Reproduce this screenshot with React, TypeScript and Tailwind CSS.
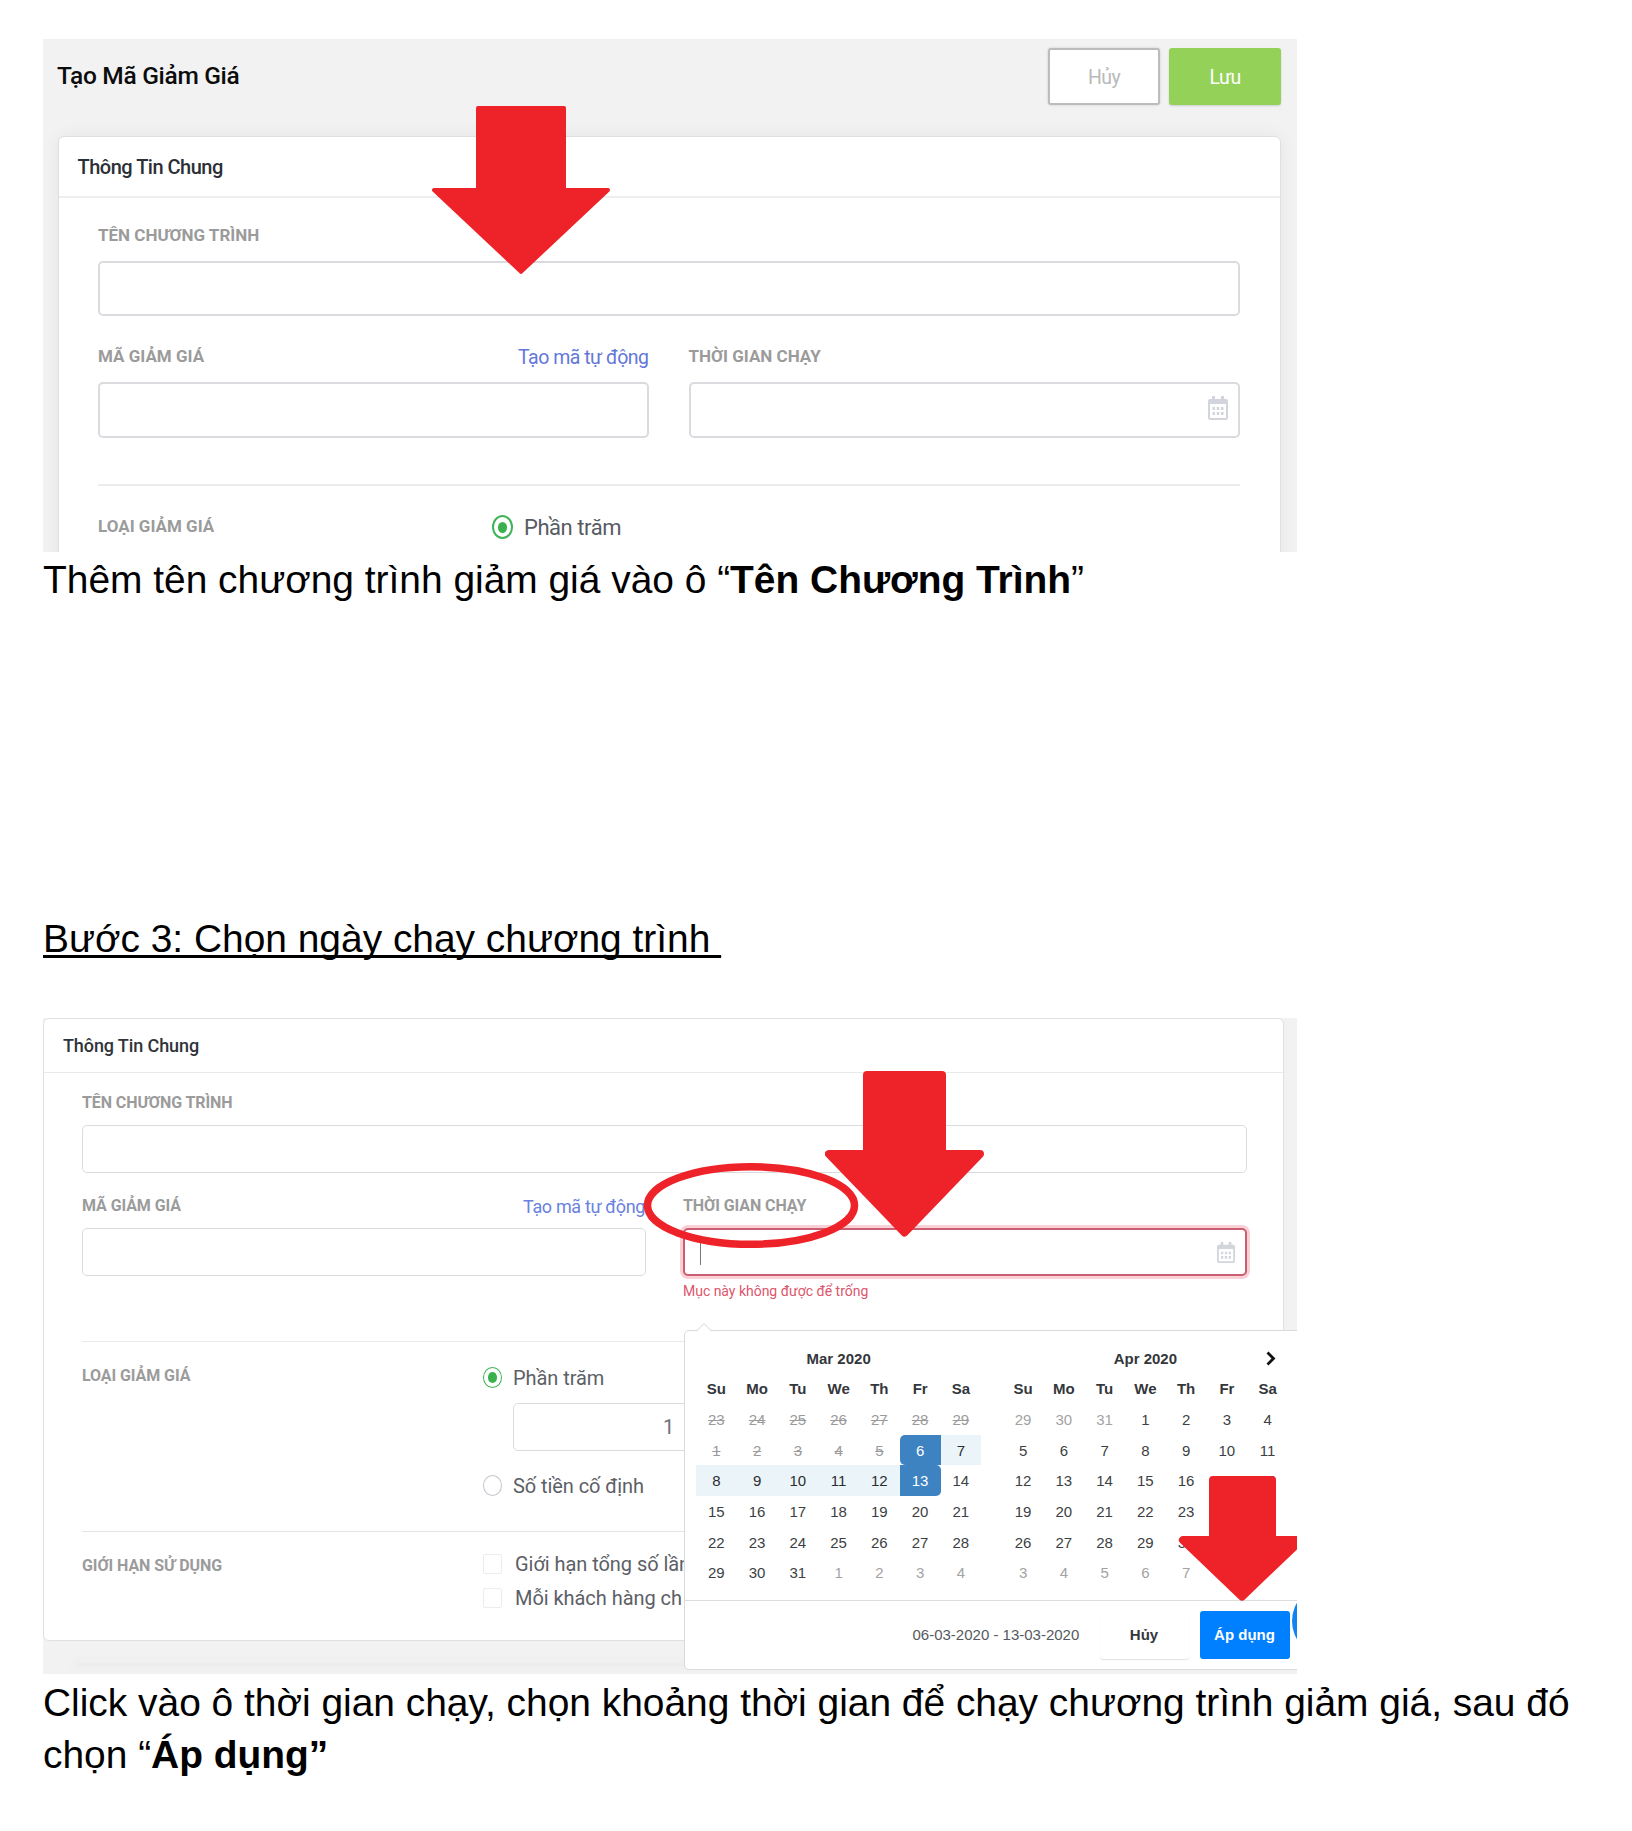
import React from "react";

const RED = "#ee2229";

/* Downward block arrow laid over a figure */
function Arrow({ className, width, height, shaftLeft, shaftRight, neck, round }: {
  className: string; width: number; height: number; shaftLeft: number; shaftRight: number; neck: number; round: number;
}) {
  const r = round;
  return (
    <svg className={"absolute z-20 " + className} width={width} height={height} viewBox={`0 0 ${width} ${height}`}>
      <path
        d={`M${shaftLeft + r} ${r}H${shaftRight - r}V${neck + r}H${width - r}L${width / 2} ${height - r * 1.6}L${r} ${neck + r}H${shaftLeft + r}Z`}
        fill={RED}
        stroke={RED}
        strokeWidth={r * 2}
        strokeLinejoin="round"
      />
    </svg>
  );
}

function CalendarIcon({ className }: { className: string }) {
  return (
    <svg className={className} viewBox="0 0 20 24" preserveAspectRatio="none" fill="#d2d5dc">
      <path d="M4 0h3v3h6V0h3v3h2a2 2 0 0 1 2 2v17a2 2 0 0 1-2 2H2a2 2 0 0 1-2-2V5a2 2 0 0 1 2-2h2zM2 8V22h16V8z" fillRule="evenodd" />
      <path d="M4.500 11h2.500v3h-2.500zM8.750 11h2.500v3h-2.500zM13 11h2.500v3h-2.500zM4.500 16h2.500v3h-2.500zM8.750 16h2.500v3h-2.500zM13 16h2.500v3h-2.500z" />
    </svg>
  );
}

function Radio({ checked, className }: { checked?: boolean; className: string }) {
  return (
    <span className={"flex shrink-0 items-center justify-center rounded-[50%] border bg-white " + (checked ? "border-[#41b457] " : "border-[#c3c6cb] ") + className}>
      {checked && <span className="h-[55%] w-[55%] rounded-[50%] bg-[#39b24d]" />}
    </span>
  );
}

function CreateCouponFigure() {
  const label = "text-[17px] leading-5 font-bold text-[#9b9b9b]";
  const field = "rounded-[5px] border-2 border-[#d9dbdf] bg-white";
  return (
    <figure className="relative h-[513px] w-[1254px] overflow-hidden bg-[#f2f2f2] font-[Roboto,sans-serif]">
      <div className="flex h-[97px] items-start justify-between pt-[9px] pr-4 pl-[14px]">
        <h1 className="mt-[12.500px] text-[24.500px] leading-[30px] font-medium tracking-[-0.3px] text-[#0c0c0c]">Tạo Mã Giảm Giá</h1>
        <div className="flex gap-[9px]">
          <button className="h-[57px] w-[112px] rounded-[3px] border-2 border-[#bcbcbd] bg-white pt-[2px] text-[19.500px] tracking-[-0.6px] text-[#b9b9bb] shadow-[0_0_3px_rgba(0,0,0,0.15)]">Hủy</button>
          <button className="h-[57px] w-[112px] rounded-[3px] bg-[#94d158] pt-[2px] text-[19.500px] tracking-[-0.6px] text-white shadow-[0_1px_2px_rgba(0,0,0,0.15)]">Lưu</button>
        </div>
      </div>
      <section className="ml-[15px] h-[440px] w-[1223px] rounded-t-[6px] border border-[#dfdfdf] bg-white shadow-[0_0_18px_rgba(0,0,0,0.06)]">
        <h2 className="flex h-[61px] items-center border-b-2 border-[#eceef0] pt-px pl-[18.500px] text-[20px] font-medium tracking-[-0.5px] text-[#2b3036]">Thông Tin Chung</h2>
        <div className="pt-[27px] pr-10 pl-[39px]">
          <div className={label}>TÊN CHƯƠNG TRÌNH</div>
          <div className={"mt-4 h-[55px] " + field} />
          <div className="mt-[30px] flex gap-[40px]">
            <div className="w-[551px]">
              <div className="flex justify-between">
                <span className={label}>MÃ GIẢM GIÁ</span>
                <a className="relative top-[2px] text-[19.500px] leading-5 tracking-[-0.5px] text-[#6377d9]">Tạo mã tự động</a>
              </div>
              <div className={"mt-4 h-14 " + field} />
            </div>
            <div className="w-[552px]">
              <div className={label}>THỜI GIAN CHẠY</div>
              <div className={"mt-4 flex h-14 items-start justify-end pt-3 pr-[10px] " + field}>
                <CalendarIcon className="h-6 w-5" />
              </div>
            </div>
          </div>
          <div className="mt-[46px] border-t-2 border-[#ececec]" />
          <div className="mt-[29px] flex">
            <div className={"mt-px w-[394px] " + label}>LOẠI GIẢM GIÁ</div>
            <Radio checked className="h-6 w-[21px] border-2" />
            <span className="ml-[11px] pt-[0.500px] text-[22px] leading-6 tracking-[-0.45px] text-[#575c63]">Phần trăm</span>
          </div>
        </div>
      </section>
      <Arrow className="top-[67px] left-[389px]" width={178} height={169} shaftLeft={44} shaftRight={134} neck={82} round={2} />
    </figure>
  );
}

type Kind = "off" | "muted" | "start" | "end" | "range";
type Day = { n: number; kind?: Kind };

const span = (from: number, to: number, kind?: Kind): Day[] =>
  Array.from({ length: to - from + 1 }, (_, i) => ({ n: from + i, kind }));

const march: Day[] = [
  ...span(23, 29, "off"), ...span(1, 5, "off"), { n: 6, kind: "start" }, ...span(7, 12, "range"),
  { n: 13, kind: "end" }, ...span(14, 31), ...span(1, 4, "muted"),
];
const april: Day[] = [...span(29, 31, "muted"), ...span(1, 30), ...span(1, 7, "muted")];

const dayStyle = {
  plain: "text-[#3c3f43]",
  off: "text-[#9b9b9b] line-through",
  muted: "text-[#a3a3a3]",
  start: "rounded-l-[5px] bg-[#3d82c1] text-white",
  end: "rounded-r-[5px] bg-[#3d82c1] text-white",
  range: "bg-[#ebf4f8] text-[#2b2e31]",
};

function Month({ title, days, next }: { title: string; days: Day[]; next?: boolean }) {
  return (
    <div className="relative grid auto-rows-[30.650px] grid-cols-[repeat(7,40.750px)] items-stretch text-center text-[15px] leading-[31px]">
      <div className="col-span-7 font-bold text-[#34373b]">{title}</div>
      {next && (
        <svg className="absolute top-[8px] right-[11px]" width="12" height="15" viewBox="0 0 12 15" fill="none" stroke="#111" strokeWidth="2.800">
          <path d="M2.500 1.500L8.500 7.500L2.500 13.500" />
        </svg>
      )}
      {["Su", "Mo", "Tu", "We", "Th", "Fr", "Sa"].map((d) => (
        <div key={d} className="font-bold text-[#34373b]">{d}</div>
      ))}
      {days.map((d, i) => (
        <div key={i} className={dayStyle[d.kind ?? "plain"]}>{d.n}</div>
      ))}
    </div>
  );
}

function DateRangePopup() {
  return (
    <div className="absolute top-[312px] left-[640.500px] z-10 h-[340px] w-[640px] rounded-[5px] border border-[#dadada] bg-white font-['Liberation_Sans',Arial,sans-serif]">
      <svg className="absolute -top-[9px] left-[10px]" width="18" height="10" viewBox="0 0 18 10">
        <path d="M1 9.500L9 1.500L17 9.500" fill="#fff" stroke="#d5d5d5" />
        <path d="M1 10H17" stroke="#fff" />
      </svg>
      <div className="flex gap-[21.500px] pt-[11.700px] pl-[11.500px]">
        <Month title="Mar 2020" days={march} />
        <Month title="Apr 2020" days={april} next />
      </div>
      <div className="mt-[11.800px] flex border-t border-[#dddddd] pt-[10px] pl-[228px] text-[15px] leading-[48px]">
        <span className="w-[187px] text-[#55595e]">06-03-2020 - 13-03-2020</span>
        <button className="h-12 w-[89px] rounded-[3px] bg-white text-[15px] font-bold text-[#34373b] shadow-[0_1px_1px_rgba(0,0,0,0.12)]">Hủy</button>
        <button className="ml-[11px] h-12 w-[90px] rounded-[3px] bg-[#0080ff] text-[15px] font-bold text-white">Áp dụng</button>
      </div>
    </div>
  );
}

function PickDateFigure() {
  const label = "text-[16px] leading-5 font-bold tracking-[-0.08px] text-[#9b9b9b]";
  const field = "rounded-[5px] border border-[#d9dbde] bg-white";
  const option = "text-[20px] leading-[22px] tracking-[-0.07px] text-[#5c6066]";
  return (
    <figure className="relative h-[656px] w-[1254px] overflow-hidden bg-[#f2f2f2] font-[Roboto,sans-serif]">
      <section className="h-[623px] w-[1241px] rounded-[6px] border border-[#dfe0e1] bg-white">
        <h2 className="flex h-[54px] items-center border-b border-[#e9eaec] pl-[19px] text-[18px] font-medium tracking-[-0.1px] text-[#2f343a]">Thông Tin Chung</h2>
        <div className="pt-[19.500px] pr-9 pl-[38px]">
          <div className={label}>TÊN CHƯƠNG TRÌNH</div>
          <div className={"mt-[12.500px] h-12 " + field} />
          <div className="mt-[22.500px] flex gap-[37px]">
            <div className="flex-1">
              <div className="flex justify-between">
                <span className={label}>MÃ GIẢM GIÁ</span>
                <a className="relative top-px right-px text-[18px] leading-5 tracking-[-0.35px] text-[#6a82de]">Tạo mã tự động</a>
              </div>
              <div className={"mt-[12.500px] h-12 " + field} />
            </div>
            <div className="flex-1">
              <div className={label}>THỜI GIAN CHẠY</div>
              <div className="mt-[12.500px] flex h-12 justify-between rounded-[5px] border-2 border-[#cb5e70] bg-white pt-[10px] pr-[10.500px] pl-[15px] shadow-[0_0_0_3px_#f8d0d5]">
                <span className="h-[25px] w-px bg-[#777]" />
                <CalendarIcon className="mt-[2px] h-[21px] w-[18px]" />
              </div>
              <p className="mt-[6px] text-[14px] leading-[18px] tracking-[-0.02px] text-[#dc566c]">Mục này không được để trống</p>
            </div>
          </div>
          <div className="mt-[41px] border-t border-[#e9e9e9]" />
          <div className="mt-6 flex">
            <div className={"w-[401px] " + label}>LOẠI GIẢM GIÁ</div>
            <div className="mt-px">
              <div className="flex gap-[11px]">
                <Radio checked className="h-[21px] w-[19px]" />
                <span className={option}>Phần trăm</span>
              </div>
              <div className={"mt-[14px] ml-[30px] flex h-12 w-[190px] items-center pl-[149px] text-[20px] text-[#6d7176] " + field}>1</div>
              <div className="mt-6 flex gap-[11px]">
                <Radio className="h-[21px] w-[19px]" />
                <span className={option}>Số tiền cố định</span>
              </div>
            </div>
          </div>
          <div className="mt-[34px] border-t border-[#e4e4e4]" />
          <div className="mt-[21px] flex">
            <div className={"mt-[2.500px] w-[401px] " + label}>GIỚI HẠN SỬ DỤNG</div>
            <div className="flex flex-col gap-3">
              {["Giới hạn tổng số lần", "Mỗi khách hàng ch"].map((t) => (
                <div key={t} className="flex gap-[13px] whitespace-nowrap">
                  <span className="mt-px h-5 w-[19px] shrink-0 rounded-[2px] border border-[#ececec] bg-white" />
                  <span className="text-[20px] leading-[22px] tracking-[-0.05px] text-[#5c6066]">{t}</span>
                </div>
              ))}
            </div>
          </div>
        </div>
      </section>
      <div className="mt-[22px] ml-8 h-[3px] bg-[#ededed] shadow-[0_0_8px_3px_#eeeeee]" />
      <DateRangePopup />
      <span className="absolute top-[567px] left-[1249px] z-10 size-[72px] rounded-full bg-[#0f84f2]" />
      <svg className="absolute top-[144px] left-[600px] z-20" width="216" height="88" viewBox="0 0 216 88">
        <ellipse cx="108" cy="43.500" rx="103.500" ry="38.800" fill="none" stroke={RED} strokeWidth="7.500" />
      </svg>
      <Arrow className="top-[53px] left-[782px]" width={159} height={168} shaftLeft={38} shaftRight={121} neck={79} round={4} />
      <Arrow className="top-[458px] left-[1136px]" width={126} height={127} shaftLeft={30} shaftRight={97} neck={60} round={4} />
    </figure>
  );
}

export default function App() {
  return (
    <main className="h-[1831px] w-[1632px] overflow-hidden bg-white pt-[39px] pl-[43px] font-['Liberation_Sans',Arial,sans-serif] text-[38.900px] leading-[52px] text-black">
      <CreateCouponFigure />
      <p className="mt-[2px] whitespace-nowrap">
        Thêm tên chương trình giảm giá vào ô “<b>Tên Chương Trình</b>”
      </p>
      <p className="mt-[307px] whitespace-nowrap underline decoration-[2.500px] underline-offset-[3px] [text-decoration-skip-ink:none]">
        Bước 3: Chọn ngày chạy chương trình&nbsp;
      </p>
      <div className="mt-[53px]">
        <PickDateFigure />
      </div>
      <p className="mt-[3px] leading-[51.700px] whitespace-nowrap">
        Click vào ô thời gian chạy, chọn khoảng thời gian để chạy chương trình giảm giá, sau đó
        <br />
        chọn “<b>Áp dụng”</b>
      </p>
    </main>
  );
}
